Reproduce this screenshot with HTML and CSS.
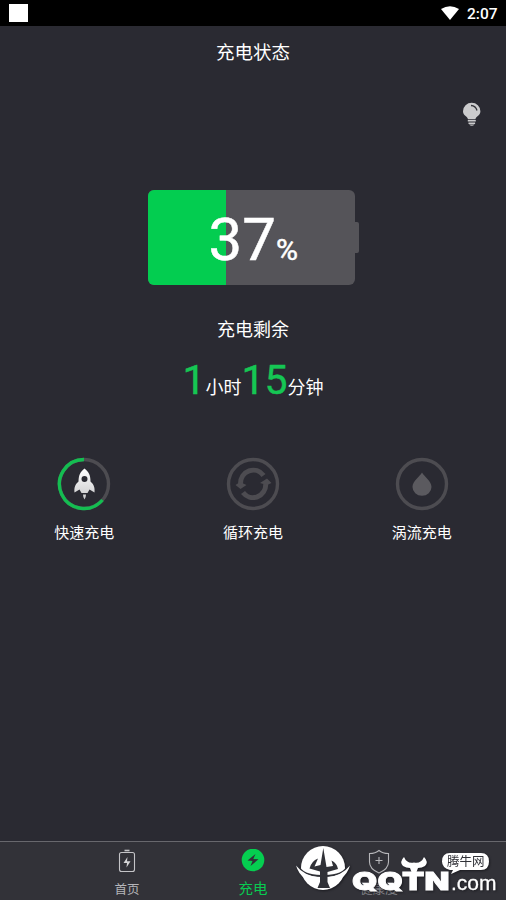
FILE: index.html
```html
<!DOCTYPE html>
<html lang="zh-CN">
<head>
<meta charset="utf-8">
<title>充电状态</title>
<link rel="stylesheet" href="styles.css">
</head>
<body>
<div class="screen">
  <div class="statusbar">
    <span class="square"></span>
    <svg class="wifi" width="18" height="14" viewBox="0 0 18 14"><path d="M0 3Q9-2.600 18 3L9 14Z" fill="#fff"/></svg>
    <span class="clock">2:07</span>
  </div>
  <header class="title">充电状态</header>
  <div class="tip">
    <svg width="20" height="26" viewBox="0 0 20 26"><path d="M6 17.200C5.500 14.500 1 13.500 1 9.300a8.700 8.500 0 0 1 17.400 0c0 4.200-4.400 5.200-5 7.900Z" fill="#cbcbcd"/><path d="M9 3.500q4.700.2 6 5" fill="none" stroke="#34343a" stroke-width="1.300"/><path d="M5.800 18.800h8M6.500 21.300h6.600" stroke="#cbcbcd" stroke-width="1.400"/><path d="M7 22.500h5.600q-2.800 2.500-5.600 0" fill="#cbcbcd"/></svg>
  </div>
  <main>
    <div class="battery">
      <div class="cell"><div class="level" style="width:38%"></div><div class="percent">37<small>%</small></div></div>
      <div class="cap"></div>
    </div>
    <div class="remain">充电剩余</div>
    <div class="time"><b>1</b><span class="hour">小时</span><b>15</b><span>分钟</span></div>
    <div class="modes">
      <div class="mode">
        <svg width="54" height="54" viewBox="0 0 54 54"><defs><linearGradient id="r" x2="0" y2="1"><stop stop-color="#fff"/><stop offset="1" stop-color="#c9c9cb"/></linearGradient></defs><circle cx="27" cy="27" r="24.500" fill="none" stroke="#4d4c51" stroke-width="3.400"/><path d="M27 2.500A24.500 24.500 0 1 0 45.500 43" fill="none" stroke="#14bd51" stroke-width="3.400"/><path fill-rule="evenodd" d="M27.500 11.500C23.500 14.500 21.500 18 21.500 24.500C18 27.500 17 31 17.500 35.500L22.500 32.500L24.500 36H30.500L32.500 32.500L37.500 35.500C38 31 37 27.500 33.500 24.500C33.500 18 31.500 14.500 27.500 11.500ZM27.500 19a3 3 0 1 1 0 6a3 3 0 0 1 0-6ZM26 37.500h3q0 3-1.500 5q-1.500-2-1.500-5" fill="url(#r)"/></svg>
        <span>快速充电</span>
      </div>
      <div class="mode">
        <svg width="54" height="54" viewBox="0 0 54 54"><g fill="none" stroke="#4d4c51"><circle cx="27" cy="27" r="24.500" stroke-width="3.400"/><path d="M14.500 27A12.800 13.500 0 0 1 37.500 18.500M39.800 27A12.800 13.500 0 0 1 17 35.500" stroke-width="5"/></g><path d="M9.500 28L14 25L20.500 28L14.500 32ZM34 26L41 21.500L45.500 26L41 28Z" fill="#4d4c51"/></svg>
        <span>循环充电</span>
      </div>
      <div class="mode">
        <svg width="54" height="54" viewBox="0 0 54 54"><circle cx="27" cy="27" r="24.500" fill="none" stroke="#4d4c51" stroke-width="3.400"/><path d="M27 15.500C29 19.500 36.500 24 36.500 30A9.500 8.700 0 0 1 17.500 30C17.500 24 25 19.500 27 15.500Z" fill="#5b5a5f"/></svg>
        <span>涡流充电</span>
      </div>
    </div>
  </main>
  <nav>
    <div class="tab">
      <svg width="24" height="26" viewBox="0 0 24 26"><rect x="4.500" y="3.500" width="15" height="19" rx="2" fill="none" stroke="#c4c4c7" stroke-width="1.100"/><path d="M9.500 1.500h5" stroke="#c4c4c7" stroke-width="1.600"/><path d="M12.500 8L8.500 14H12L11.500 18.500L15.500 12.200H12Z" fill="#d4d4d6"/></svg>
      <span>首页</span>
    </div>
    <div class="tab active">
      <svg width="24" height="26" viewBox="0 0 24 26"><circle cx="12" cy="11" r="11.300" fill="#05ce50"/><path d="M14.500 5L6.500 11.500L11.500 12L9.500 17L17.500 10.300L12.300 10Z" fill="#303137"/></svg>
      <span>充电</span>
    </div>
    <div class="tab">
      <svg width="24" height="26" viewBox="0 0 24 26"><path d="M12 1.500Q15.500 4.500 21.500 4.500V13Q21.500 20 12 24Q2.500 20 2.500 13V4.500Q8.500 4.500 12 1.500ZM12 8v7M8.500 11.500h7" fill="none" stroke="#b7b7ba" stroke-width="1.100"/></svg>
      <span class="health">健康度</span>
    </div>
  </nav>
  <div class="brand">
    <svg width="210" height="60" viewBox="0 0 210 60">
      <circle cx="27" cy="28" r="22" fill="#fff"/>
      <path d="M1 25Q7 36 25 36H29Q47 36 53 25" fill="none" stroke="#303137" stroke-width="1.800"/>
      <path d="M0 25.500Q8 36 24 37.500V43Q5 42 0 25.500ZM54 25.500Q46 36 30 37.500V43Q49 42 54 25.500Z" fill="#fff"/>
      <path d="M27.300 8L24.500 25L18.500 26.500L22 18.500Q15.500 21 13.500 28.500L24 31.500V42L21.500 48H34L31.500 42V32L42 29Q41 23 35.500 20.500L37 26L30.500 27Z" fill="#303137"/>
      <path d="M108 17Q111 24 118 22.500Q125 24 128 17Q133 22 129 26Q126 28 122 28L120.500 32H115.500L114 28Q110 28 107 26Q103 22 108 17Z" fill="#fff"/>
      <path d="M154 13H185Q193 13 193 21.500T185 30H164L155 34L157 30H154Q146 28 146 21.500Q146 13 154 13Z" fill="#fff"/>
    </svg>
    <span class="name">QQTN</span><span class="domain">.com</span><span class="bubble">腾牛网</span>
  </div>
</div>
</body>
</html>
```
FILE: styles.css
```css
* { box-sizing: border-box; }
body { margin: 0; background: #2a2a32; }
.screen {
  position: relative;
  width: 506px;
  height: 900px;
  overflow: hidden;
  display: flex;
  flex-direction: column;
  background: #2a2a32;
  color: #fff;
  font-family: Roboto, "Noto Sans CJK SC", sans-serif;
}
svg { display: block; flex: none; }
.statusbar { height: 26px; display: flex; align-items: center; padding: 0 8px 0 9px; background: #000; }
.square { width: 19px; height: 18px; background: #fff; margin-right: auto; }
.wifi { margin-right: 8px; }
.clock { width: 31px; font-size: 15.500px; font-weight: 500; line-height: 26px; padding-top: 1px; white-space: nowrap; }
.title { height: 52px; line-height: 54px; text-align: center; font-size: 18.500px; }
.tip { height: 112px; padding: 24px 24px 0 0; display: flex; justify-content: flex-end; }
main { flex: 1; display: flex; flex-direction: column; align-items: center; }
.battery { width: 211px; display: flex; align-items: center; }
.cell { position: relative; width: 207px; height: 95px; overflow: hidden; border-radius: 6px; background: #555459; }
.level { height: 100%; background: #03cd50; }
.percent { position: absolute; inset: 0; padding-left: 61px; line-height: 100px; font-size: 60px; white-space: nowrap; -webkit-text-stroke: 0.5px #fff; }
.percent small { font-size: 30px; }
.cap { width: 4px; height: 31px; background: #555459; border-radius: 0 2px 2px 0; }
.remain { margin-top: 31px; height: 28px; line-height: 28px; font-size: 18px; }
.time { height: 50px; margin-top: 11px; line-height: 50px; display: flex; align-items: baseline; font-size: 18px; }
.time b { font-size: 41px; font-weight: 400; color: #15c654; -webkit-text-stroke: 0.4px #15c654; }
.modes { align-self: stretch; margin-top: 52px; display: grid; grid-template-columns: repeat(3, 1fr); }
.mode { display: flex; flex-direction: column; align-items: center; font-size: 15px; }
.mode span { margin-top: 10px; line-height: 24px; }
nav { height: 59px; display: flex; justify-content: center; background: #323238; border-top: 1px solid #68686d; }
.tab { width: 126px; padding-top: 7px; display: flex; flex-direction: column; align-items: center; color: #b5b5b9; font-size: 12.500px; }
.tab span { line-height: 18px; margin-top: 6px; }
.tab .health { color: #85858a; }
.tab.active { color: #08ca51; font-size: 14.500px; }
.brand { position: absolute; left: 296px; top: 840px; width: 210px; height: 60px; filter: drop-shadow(1px 1px 1px #1b1b20); }
.brand svg { overflow: visible; }
.brand span { position: absolute; white-space: nowrap; line-height: 1; }
.brand .name { left: 56px; top: 29px; font: 900 25px/1 Inter, sans-serif; transform: scaleX(1.3); transform-origin: left; -webkit-text-stroke: 0.8px #fff; }
.brand .domain { left: 155px; top: 32px; font: 21px/1 "Liberation Sans", sans-serif; -webkit-text-stroke: 0.3px #fff; }
.brand .bubble { left: 151px; top: 16px; font-size: 12.500px; color: #303137; }
```
